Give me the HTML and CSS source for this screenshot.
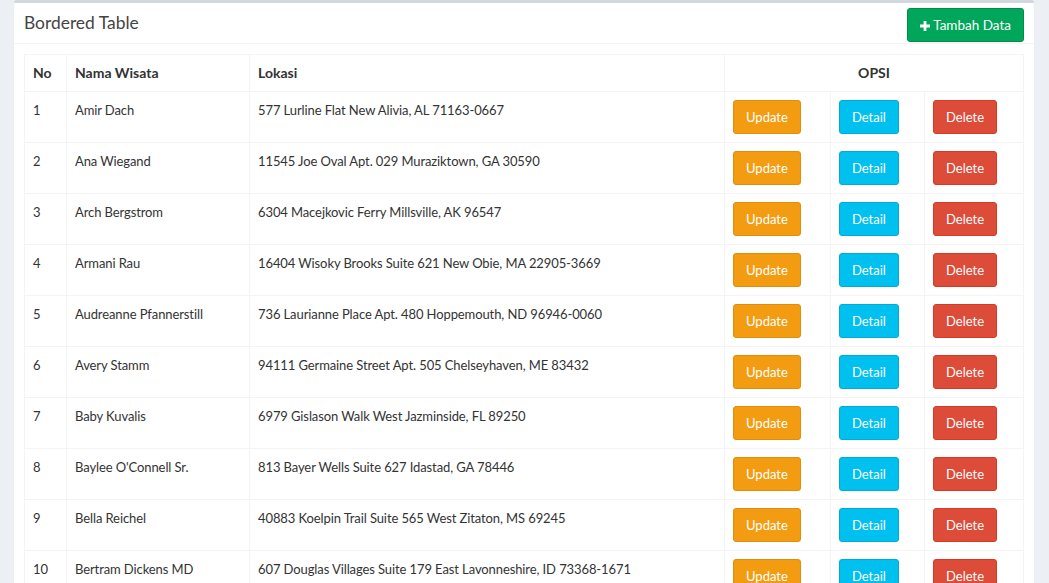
FILE: index.html
```html
<!DOCTYPE html>
<html>
<head>
<meta charset="utf-8">
<link rel="stylesheet" href="styles.css">
</head>
<body>
<div class="content">
  <div class="box">
    <div class="box-header">
      <h3 class="box-title">Bordered Table</h3>
      <div class="box-tools">
        <button class="btn btn-success btn-add"><svg class="plus" viewBox="0 0 10 10" width="10" height="10"><path d="M3.6 0h2.8v3.6H10v2.8H6.4V10H3.6V6.4H0V3.6h3.6z" fill="#fff"/></svg>Tambah Data</button>
      </div>
    </div>
    <div class="box-body">
      <table class="table">
        <colgroup>
          <col class="c-no"><col class="c-nama"><col class="c-lok"><col class="c-up"><col class="c-de"><col class="c-del">
        </colgroup>
        <tr>
          <th>No</th><th>Nama Wisata</th><th>Lokasi</th><th colspan="3" class="center">OPSI</th>
        </tr>
        <tr><td>1</td><td>Amir Dach</td><td>577 Lurline Flat New Alivia, AL 71163-0667</td><td><button class="btn btn-warning">Update</button></td><td><button class="btn btn-info">Detail</button></td><td><button class="btn btn-danger">Delete</button></td></tr>
        <tr><td>2</td><td>Ana Wiegand</td><td>11545 Joe Oval Apt. 029 Muraziktown, GA 30590</td><td><button class="btn btn-warning">Update</button></td><td><button class="btn btn-info">Detail</button></td><td><button class="btn btn-danger">Delete</button></td></tr>
        <tr><td>3</td><td>Arch Bergstrom</td><td>6304 Macejkovic Ferry Millsville, AK 96547</td><td><button class="btn btn-warning">Update</button></td><td><button class="btn btn-info">Detail</button></td><td><button class="btn btn-danger">Delete</button></td></tr>
        <tr><td>4</td><td>Armani Rau</td><td>16404 Wisoky Brooks Suite 621 New Obie, MA 22905-3669</td><td><button class="btn btn-warning">Update</button></td><td><button class="btn btn-info">Detail</button></td><td><button class="btn btn-danger">Delete</button></td></tr>
        <tr><td>5</td><td>Audreanne Pfannerstill</td><td>736 Laurianne Place Apt. 480 Hoppemouth, ND 96946-0060</td><td><button class="btn btn-warning">Update</button></td><td><button class="btn btn-info">Detail</button></td><td><button class="btn btn-danger">Delete</button></td></tr>
        <tr><td>6</td><td>Avery Stamm</td><td>94111 Germaine Street Apt. 505 Chelseyhaven, ME 83432</td><td><button class="btn btn-warning">Update</button></td><td><button class="btn btn-info">Detail</button></td><td><button class="btn btn-danger">Delete</button></td></tr>
        <tr><td>7</td><td>Baby Kuvalis</td><td>6979 Gislason Walk West Jazminside, FL 89250</td><td><button class="btn btn-warning">Update</button></td><td><button class="btn btn-info">Detail</button></td><td><button class="btn btn-danger">Delete</button></td></tr>
        <tr><td>8</td><td>Baylee O'Connell Sr.</td><td>813 Bayer Wells Suite 627 Idastad, GA 78446</td><td><button class="btn btn-warning">Update</button></td><td><button class="btn btn-info">Detail</button></td><td><button class="btn btn-danger">Delete</button></td></tr>
        <tr><td>9</td><td>Bella Reichel</td><td>40883 Koelpin Trail Suite 565 West Zitaton, MS 69245</td><td><button class="btn btn-warning">Update</button></td><td><button class="btn btn-info">Detail</button></td><td><button class="btn btn-danger">Delete</button></td></tr>
        <tr><td>10</td><td>Bertram Dickens MD</td><td>607 Douglas Villages Suite 179 East Lavonneshire, ID 73368-1671</td><td><button class="btn btn-warning">Update</button></td><td><button class="btn btn-info">Detail</button></td><td><button class="btn btn-danger">Delete</button></td></tr>
      </table>
    </div>
  </div>
</div>
</body>
</html>
```
FILE: styles.css
```css
html, body {
  margin: 0;
  padding: 0;
  background: #ecf0f5;
  font-family: "Source Sans Pro", Lato, "Open Sans", sans-serif;
  font-size: 14px;
  line-height: 1.42857;
  color: #333;
  overflow: hidden;
}
.content {
  padding: 0 15px 0 14px;
}
.box {
  position: relative;
  background: #fff;
  border-top: 3px solid #d2d6de;
  border-radius: 3px;
  box-shadow: 0 1px 1px rgba(0,0,0,0.1);
}
.box-header {
  position: relative;
  padding: 10px;
  border-bottom: 1px solid #f4f4f4;
  height: 20px;
}
.box-title {
  margin: 0;
  font-size: 17.4px;
  font-weight: 400;
  line-height: 1.1;
  color: #444;
}
.box-tools {
  position: absolute;
  right: 10px;
  top: 5px;
}
.box-body {
  padding: 10px;
}
.btn {
  display: inline-block;
  font-family: inherit;
  font-size: 13px;
  line-height: 20px;
  padding: 6px 12px;
  border: 1px solid transparent;
  border-radius: 3px;
  color: #fff;
  cursor: pointer;
  box-shadow: none;
}
.btn-add {
  font-size: 13.5px;
}
.plus {
  margin-right: 3px;
  vertical-align: -1px;
}
.btn-success { background: #00a65a; border-color: #008d4c; }
.btn-warning { background: #f39c12; border-color: #e08e0b; }
.btn-info { background: #00c0ef; border-color: #00acd6; }
.btn-danger { background: #dd4b39; border-color: #d73925; }
.table {
  width: 100%;
  border-collapse: collapse;
  table-layout: fixed;
  border: 1px solid #f4f4f4;
}
.table th, .table td {
  border: 1px solid #f4f4f4;
  padding: 8px;
  vertical-align: top;
  text-align: left;
  line-height: 20px;
}
.table td { font-size: 13px; letter-spacing: -0.1px; }
.table th { font-weight: 700; font-size: 14px; }
.table th.center { text-align: center; }
.c-no { width: 42px; }
.c-nama { width: 183px; }
.c-lok { width: 475px; }
.c-up { width: 106px; }
.c-de { width: 94px; }
.c-del { width: 99px; }
```
